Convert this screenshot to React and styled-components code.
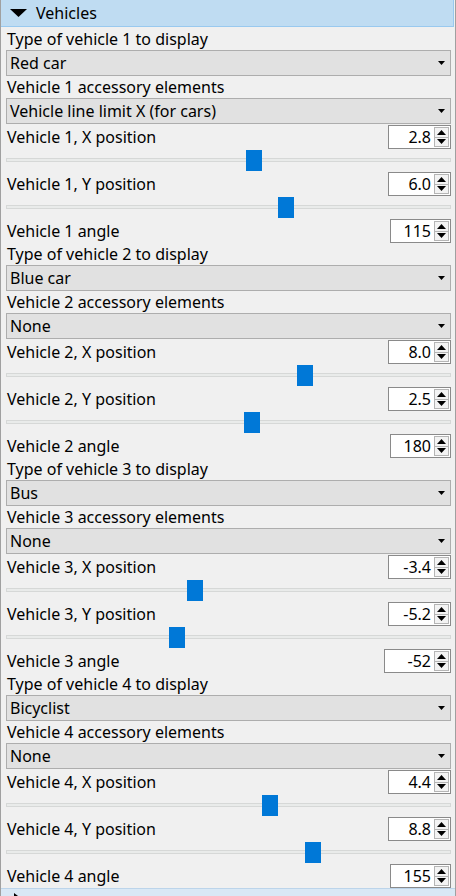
import React from "react"
import styled, { createGlobalStyle } from "styled-components"

const vehicles = [
  { n: 1, type: "Red car", acc: "Vehicle line limit X (for cars)", x: "2.8", xPos: 240, y: "6.0", yPos: 272, angle: "115", angleW: 61 },
  { n: 2, type: "Blue car", acc: "None", x: "8.0", xPos: 291, y: "2.5", yPos: 238, angle: "180", angleW: 61 },
  { n: 3, type: "Bus", acc: "None", x: "-3.4", xPos: 181, y: "-5.2", yPos: 163, angle: "-52", angleW: 67 },
  { n: 4, type: "Bicyclist", acc: "None", x: "4.4", xPos: 256, y: "8.8", yPos: 299, angle: "155", angleW: 61 },
]

function Vehicle({ v }) {
  return (
    <>
      <Label>Type of vehicle {v.n} to display</Label>
      <Combo>
        {v.type}
        <ComboArrow />
      </Combo>
      <Label>Vehicle {v.n} accessory elements</Label>
      <Combo>
        {v.acc}
        <ComboArrow />
      </Combo>
      <SpinRow>
        <RowText>Vehicle {v.n}, X position</RowText>
        <Spin value={v.x} width={63} />
      </SpinRow>
      <Slider>
        <Track />
        <Thumb style={{ left: v.xPos }} />
      </Slider>
      <SpinRow>
        <RowText>Vehicle {v.n}, Y position</RowText>
        <Spin value={v.y} width={63} />
      </SpinRow>
      <Slider>
        <Track />
        <Thumb style={{ left: v.yPos }} />
      </Slider>
      <SpinRow>
        <RowText>Vehicle {v.n} angle</RowText>
        <Spin value={v.angle} width={v.angleW} />
      </SpinRow>
    </>
  )
}

function Spin({ value, width }) {
  return (
    <SpinBox $w={width}>
      <SpinValue>{value}</SpinValue>
      <SpinButtons>
        <SpinBtn>
          <svg width="9" height="5" viewBox="0 0 9 5">
            <polygon points="0,5 4.5,0 9,5" fill="#000" />
          </svg>
        </SpinBtn>
        <SpinBtn>
          <svg width="9" height="5" viewBox="0 0 9 5">
            <polygon points="0,0 9,0 4.5,5" fill="#000" />
          </svg>
        </SpinBtn>
      </SpinButtons>
    </SpinBox>
  )
}

function ComboArrow() {
  return (
    <ArrowIcon width="7" height="4" viewBox="0 0 7 4">
      <polygon points="0,0 7,0 3.5,4" fill="#000" />
    </ArrowIcon>
  )
}

export default function App() {
  return (
    <>
      <GlobalStyle />
      <Panel>
        <Header>
          <svg width="17" height="8" viewBox="0 0 17 8">
            <polygon points="0,0 17,0 8.5,8" fill="#000" />
          </svg>
          Vehicles
        </Header>
        <Content>
          {vehicles.map((v) => (
            <Vehicle key={v.n} v={v} />
          ))}
        </Content>
        <NextHeader>
          <svg width="8" height="12" viewBox="0 0 8 12">
            <polygon points="0,0 8,6 0,12" fill="#000" />
          </svg>
        </NextHeader>
      </Panel>
    </>
  )
}

const GlobalStyle = createGlobalStyle`
  body {
    margin: 0;
    background: #f0f0f0;
    font-family: "Noto Sans", "Open Sans", sans-serif;
    font-size: 16px;
    color: #000;
  }
`

const Panel = styled.div`
  width: 456px;
  height: 896px;
  box-sizing: border-box;
  overflow: hidden;
  background: #f0f0f0;
  border-left: 1px solid #a0a0a0;
  border-right: 1px solid #a0a0a0;
`

const Header = styled.div`
  height: 27px;
  box-sizing: border-box;
  margin-right: 1px;
  background: #bfdcf2;
  border-bottom: 1px solid #99c9ef;
  border-right: 1px solid #99c9ef;
  display: flex;
  align-items: center;
  gap: 9px;
  padding-left: 9px;
  font-size: 16px;
`

const Content = styled.div`
  padding: 1px 4px 0 5px;
`

const Label = styled.div`
  height: 22px;
  line-height: 23px;
  padding-left: 1px;
  white-space: nowrap;
`

const Combo = styled.div`
  height: 26px;
  box-sizing: border-box;
  border: 1px solid #adadad;
  background: #e1e1e1;
  display: flex;
  align-items: center;
  justify-content: space-between;
  padding: 0 5px 0 3px;
`

const ArrowIcon = styled.svg`
  display: block;
`

const SpinRow = styled.div`
  height: 24px;
  margin-top: 1px;
  display: flex;
  align-items: center;
  justify-content: space-between;
`

const RowText = styled.span`
  padding-left: 1px;
  white-space: nowrap;
`

const SpinBox = styled.div`
  width: ${(p) => p.$w}px;
  height: 24px;
  box-sizing: border-box;
  border: 1px solid #8a8a8a;
  background: #fff;
  display: flex;
  align-items: stretch;
`

const SpinValue = styled.div`
  flex: 1;
  text-align: right;
  line-height: 22px;
  padding-right: 3px;
  font-size: 16px;
`

const SpinButtons = styled.div`
  width: 15px;
  display: flex;
  flex-direction: column;
  padding: 1px 1px 1px 0;
`

const SpinBtn = styled.div`
  flex: 1;
  box-sizing: border-box;
  border: 1px solid #b5b5b5;
  background: #f3f3f3;
  display: flex;
  align-items: center;
  justify-content: center;

  & + & {
    border-top: none;
  }
`

const Slider = styled.div`
  position: relative;
  height: 22px;
  display: flex;
  align-items: center;
`

const Track = styled.div`
  flex: 1;
  height: 4px;
  box-sizing: border-box;
  border: 1px solid #d6d8d7;
  background: #e9ebea;
`

const Thumb = styled.div`
  position: absolute;
  top: 1px;
  width: 16px;
  height: 21px;
  background: #0078d7;
`

const NextHeader = styled.div`
  height: 20px;
  box-sizing: border-box;
  border-top: 1px solid #bcd4ea;
  background: #d9e8f5;
  display: flex;
  align-items: flex-start;
  padding: 4px 0 0 13px;
`
